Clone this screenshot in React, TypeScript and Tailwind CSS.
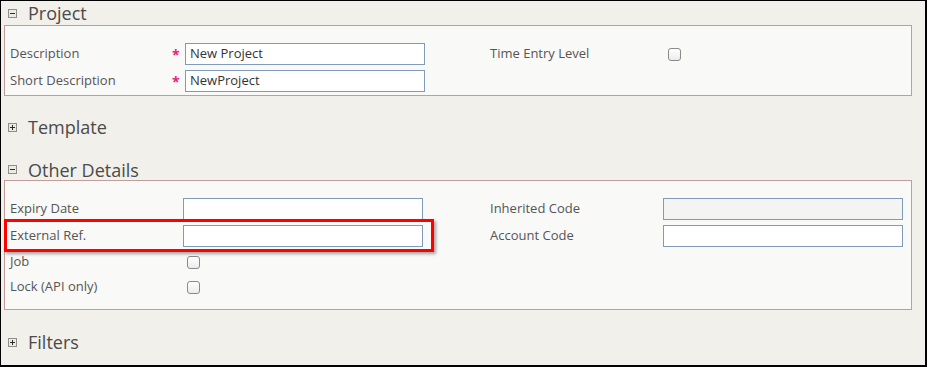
import React from 'react';

function Toggle({ open }: { open: boolean }) {
  return (
    <svg width="9" height="9" viewBox="0 0 9 9" className="shrink-0">
      <rect x="0.5" y="0.5" width="8" height="8" fill="#ebebe6" stroke="#8e8e8a" />
      <path d="M2 4.5h5" stroke="#2b2b2b" />
      {!open && <path d="M4.5 2v5" stroke="#2b2b2b" />}
    </svg>
  );
}

function SectionHeader({ title, open, className }: { title: string; open: boolean; className: string }) {
  return (
    <div className={`flex items-center gap-[11px] pl-[7px] ${className}`}>
      <Toggle open={open} />
      <span className="text-[18px] leading-none text-[#4a4a4a]">{title}</span>
    </div>
  );
}

function Checkbox() {
  return (
    <span className="block h-[13px] w-[13px] rounded-[3px] border border-[#8a8a8a] bg-gradient-to-b from-white to-[#ececec]" />
  );
}

function TextBox({ value, disabled }: { value?: string; disabled?: boolean }) {
  return (
    <div
      className={`flex h-[22px] w-[240px] items-center border border-[#7f9bb9] px-[4px] text-[13px] text-[#333] ${
        disabled ? 'bg-[#f4f4f2]' : 'bg-white'
      }`}
    >
      {value}
    </div>
  );
}

export default function App() {
  return (
    <div className="h-[367px] w-[928px] bg-white font-['Open_Sans',sans-serif]">
      <div className="h-[367px] w-[927px] border-t border-r-2 border-b-2 border-l border-black bg-[#f1f0ea]">
        <SectionHeader title="Project" open className="h-[24px]" />

        {/* Project */}
        <div className="ml-[3px] w-[908px] border border-[#c39c9c] bg-[#f9f9f7] pt-[17px] pb-[3px] pl-[5px]">
          <div className="flex h-[22px] items-center">
            <span className="w-[162px] text-[13px] text-[#555]">Description</span>
            <span className="w-[13px] text-[14px] font-bold text-[#e8207e]">*</span>
            <TextBox value="New Project" />
            <span className="ml-[65px] w-[178px] text-[13px] text-[#555]">Time Entry Level</span>
            <Checkbox />
          </div>
          <div className="mt-[5px] flex h-[22px] items-center">
            <span className="w-[162px] text-[13px] text-[#555]">Short Description</span>
            <span className="w-[13px] text-[14px] font-bold text-[#e8207e]">*</span>
            <TextBox value="NewProject" />
          </div>
        </div>

        <SectionHeader title="Template" open={false} className="mt-[19px] h-[24px]" />
        <SectionHeader title="Other Details" open className="mt-[20px] h-[21px]" />

        {/* Other Details */}
        <div className="ml-[3px] w-[908px] border border-[#c39c9c] bg-[#f9f9f7] pt-[17px] pb-[12px] pl-[5px]">
          <div className="flex h-[22px] items-center">
            <span className="w-[173px] text-[13px] text-[#555]">Expiry Date</span>
            <TextBox />
            <span className="ml-[67px] w-[173px] text-[13px] text-[#555]">Inherited Code</span>
            <TextBox disabled />
          </div>
          <div className="relative mt-[5px] flex h-[22px] items-center">
            <span className="w-[173px] text-[13px] text-[#555]">External Ref.</span>
            <TextBox />
            <span className="ml-[67px] w-[173px] text-[13px] text-[#555]">Account Code</span>
            <TextBox />
            <div className="absolute top-[-6px] left-[-6px] h-[33px] w-[430px] border-[3px] border-[#ff0000] shadow-[2px_2px_3px_rgba(0,0,0,0.35)]" />
          </div>
          <div className="mt-[5px] flex h-[20px] items-center">
            <span className="w-[177px] text-[13px] text-[#555]">Job</span>
            <Checkbox />
          </div>
          <div className="mt-[5px] flex h-[20px] items-center">
            <span className="w-[177px] text-[13px] text-[#555]">Lock (API only)</span>
            <Checkbox />
          </div>
        </div>

        <SectionHeader title="Filters" open={false} className="mt-[20px] h-[24px]" />
      </div>
    </div>
  );
}
